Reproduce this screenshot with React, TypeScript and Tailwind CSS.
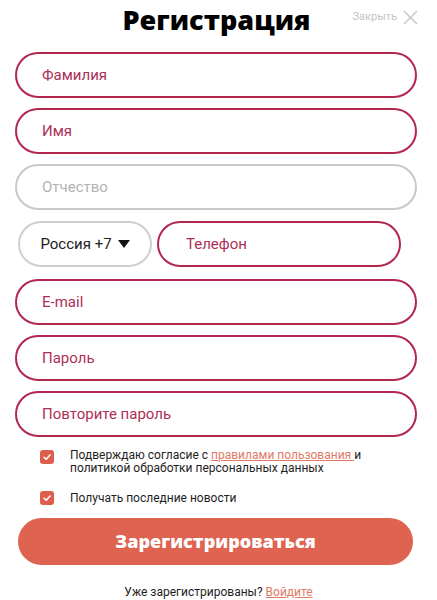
import React from 'react';

function Field({ label, muted }: { label: string; muted?: boolean }) {
  return (
    <div
      className={
        'h-[46px] rounded-full border-2 flex items-center pl-[25px] text-[15px] ' +
        (muted ? 'border-[#c9c9c9] text-[#b3b3b3]' : 'border-[#b3274f] text-[#ad2f55]')
      }
    >
      {label}
    </div>
  );
}

function Check() {
  return (
    <span className="w-[14px] h-[14px] rounded-[3px] bg-[#dc5e4c] flex items-center justify-center shrink-0">
      <svg width="10" height="10" viewBox="0 0 10 10" fill="none">
        <path d="M2 5.2L4.2 7.2L8 3" stroke="white" strokeWidth="1.5" strokeLinecap="round" strokeLinejoin="round" />
      </svg>
    </span>
  );
}

export default function App() {
  return (
    <div className="w-[437px] h-[600px] bg-white overflow-hidden px-[15px]" style={{ fontFamily: 'Roboto, "Noto Sans", sans-serif' }}>
      <header className="relative h-[52px] flex justify-center">
        <h1 className="text-[27px] leading-none font-extrabold text-black pt-[6px] pr-[4px]" style={{ fontFamily: '"Open Sans", sans-serif' }}>
          Регистрация
        </h1>
        <div className="absolute right-[4px] top-[9px] flex items-center gap-[6px] text-[11px] text-[#c4c4c4]">
          <span>Закрыть</span>
          <svg width="15" height="15" viewBox="0 0 15 15" fill="none">
            <path d="M1 1L14 14M14 1L1 14" stroke="#c8c8c8" strokeWidth="1.5" />
          </svg>
        </div>
      </header>

      <div className="flex flex-col gap-[10px] w-[402px]">
        <Field label="Фамилия" />
        <Field label="Имя" />
        <Field label="Отчество" muted />
        <div className="flex gap-[5px] pl-[3px] pr-[16px] pt-px">
          <div className="w-[134px] h-[46px] rounded-full border-2 border-[#cfcfcf] flex items-center justify-center gap-[6px] text-[15px] text-[#222]">
            Россия +7
            <svg width="12" height="9" viewBox="0 0 12 9">
              <path d="M0 0H12L6 8Z" fill="#111" />
            </svg>
          </div>
          <div className="flex-1 h-[46px] rounded-full border-2 border-[#b3274f] flex items-center pl-[27px] text-[15px] text-[#ad2f55]">
            Телефон
          </div>
        </div>
        <div className="pt-[2px]">
          <Field label="E-mail" />
        </div>
        <Field label="Пароль" />
        <Field label="Повторите пароль" />
      </div>

      <div className="mt-[12px] pl-[25px] flex flex-col gap-[16px] text-[12px] leading-[13px] text-[#1e1e1e]">
        <div className="flex gap-[16px]">
          <div className="pt-px"><Check /></div>
          <p>
            Подверждаю согласие с{' '}
            <a className="text-[#e07a66] underline">правилами пользования </a>и
            <br />
            политикой обработки персональных данных
          </p>
        </div>
        <div className="flex gap-[16px] items-center">
          <Check />
          <p>Получать последние новости</p>
        </div>
      </div>

      <button className="mt-[13px] ml-[3px] w-[395px] h-[47px] rounded-full bg-[#de6350] text-white text-[18px] font-extrabold" style={{ fontFamily: '"Open Sans", sans-serif' }}>
        Зарегистрироваться
      </button>

      <p className="mt-[18px] text-center text-[12px] text-[#1e1e1e]">
        Уже зарегистрированы? <a className="text-[#e07a66] underline">Войдите</a>
      </p>
    </div>
  );
}
